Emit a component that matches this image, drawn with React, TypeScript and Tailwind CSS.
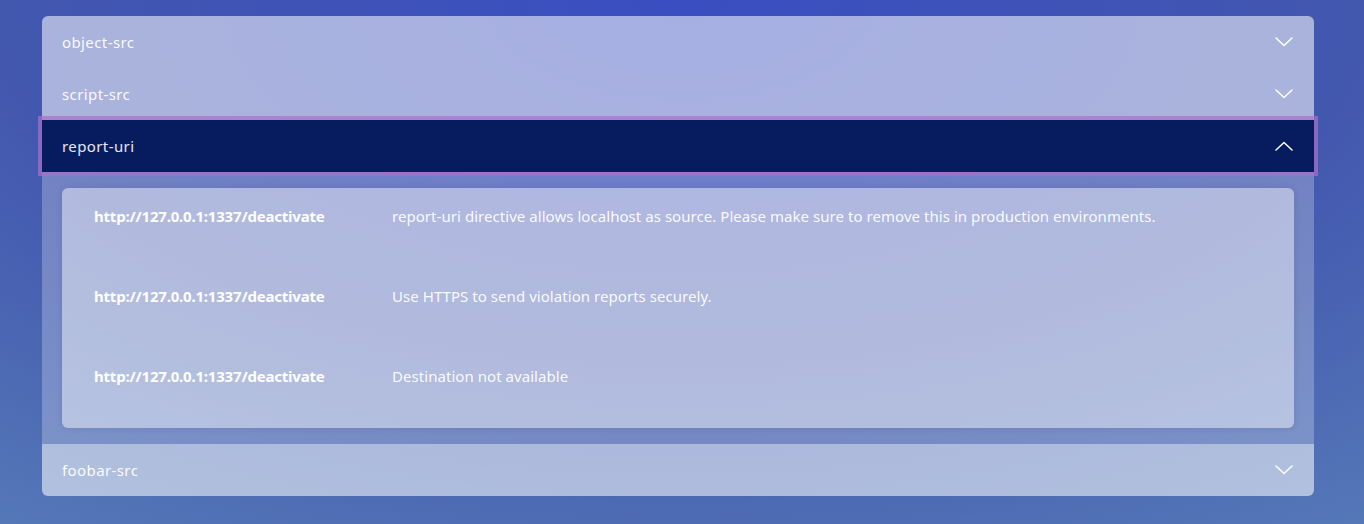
import { ChevronDown, ChevronUp } from 'lucide-react';

interface Finding {
  source: string;
  message: string;
}

const directives = ['object-src', 'script-src', 'report-uri', 'foobar-src'];

const findings: Finding[] = [
  {
    source: 'http://127.0.0.1:1337/deactivate',
    message:
      'report-uri directive allows localhost as source. Please make sure to remove this in production environments.',
  },
  { source: 'http://127.0.0.1:1337/deactivate', message: 'Use HTTPS to send violation reports securely.' },
  { source: 'http://127.0.0.1:1337/deactivate', message: 'Destination not available' },
];

const Chevron = ({ up }: { up: boolean }) => (
  <svg width="18" height="10" viewBox="0 0 18 10" fill="none" stroke="white" strokeWidth="1.5" strokeLinecap="round" strokeLinejoin="round">
    {up ? <path d="M1 9 L9 1.5 L17 9" /> : <path d="M1 1 L9 8.5 L17 1" />}
  </svg>
);

const App = () => {
  const open = 'report-uri';

  return (
    <div
      className="w-[1364px] h-[524px] px-[42px] pt-4 bg-[radial-gradient(ellipse_90%_120%_at_50%_0%,#3a4ec2_0%,#4257ae_55%,#5578b8_100%)]"
      style={{ fontFamily: '"Noto Sans", "Open Sans", sans-serif' }}
    >
      <div className="w-[1272px] flex flex-col">
        {directives.map((name, i) => {
          const isOpen = name === open;
          const first = i === 0;
          const last = i === directives.length - 1;
          return (
            <div key={name} className="flex flex-col">
              <div
                className={
                  isOpen
                    ? 'relative z-10 h-[52px] flex items-center justify-between pl-5 pr-[21px] bg-[#061c5e] ring-4 ring-[#a96fc8]/70 text-[15px] tracking-[0.4px] text-white/90'
                    : `h-[52px] flex items-center justify-between pl-5 pr-[21px] bg-white/55 text-[15px] tracking-[0.4px] text-white/95 ${
                        first ? 'rounded-t-md' : ''
                      } ${last ? 'rounded-b-md' : ''}`
                }
              >
                <span className="pt-px">{name}</span>
                <Chevron up={isOpen} />
              </div>
              {isOpen && (
                <div className="bg-white/25 px-5 py-4">
                  <div className="rounded-md bg-white/45 shadow-[0_0_6px_rgba(40,50,120,0.15)] pb-6 flex flex-col gap-6">
                    {findings.map((f, j) => (
                      <div key={j} className="h-14 flex items-center pl-8 text-[15px] text-white">
                        <span className="w-[298px] shrink-0 font-bold tracking-[-0.2px]">{f.source}</span>
                        <span className="text-white/95 tracking-[0.05px]">{f.message}</span>
                      </div>
                    ))}
                  </div>
                </div>
              )}
            </div>
          );
        })}
      </div>
    </div>
  );
};

export default App;
